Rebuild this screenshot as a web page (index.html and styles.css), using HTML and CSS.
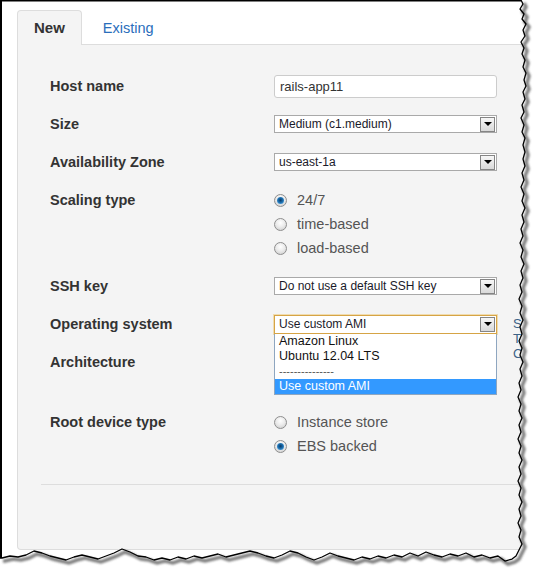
FILE: index.html
```html
<!DOCTYPE html>
<html>
<head>
<meta charset="utf-8">
<link rel="stylesheet" href="styles.css">
</head>
<body>
<div class="frame">
  <div class="tabs">
    <div class="tab active">New</div>
    <div class="tab">Existing</div>
  </div>
  <div class="panel">
    <div class="form">
      <div class="row">
        <div class="label">Host name</div>
        <div class="ctl"><div class="textbox">rails-app11</div></div>
      </div>
      <div class="row">
        <div class="label">Size</div>
        <div class="ctl"><div class="select"><span class="val">Medium (c1.medium)</span><span class="btn"></span></div></div>
      </div>
      <div class="row">
        <div class="label">Availability Zone</div>
        <div class="ctl"><div class="select"><span class="val">us-east-1a</span><span class="btn"></span></div></div>
      </div>
      <div class="row">
        <div class="label">Scaling type</div>
        <div class="radios">
          <div class="radio"><span class="dot on"></span>24/7</div>
          <div class="radio"><span class="dot"></span>time-based</div>
          <div class="radio"><span class="dot"></span>load-based</div>
        </div>
      </div>
      <div class="row">
        <div class="label">SSH key</div>
        <div class="ctl"><div class="select"><span class="val">Do not use a default SSH key</span><span class="btn"></span></div></div>
      </div>
      <div class="row os">
        <div class="label">Operating system</div>
        <div class="ctl">
          <div class="select focus"><span class="val">Use custom AMI</span><span class="btn"></span>
            <div class="dropdown">
              <div class="opt">Amazon Linux</div>
              <div class="opt">Ubuntu 12.04 LTS</div>
              <div class="opt dash">---------------</div>
              <div class="opt sel">Use custom AMI</div>
            </div>
          </div>
        </div>
        <div class="help">
          <div>Se</div>
          <div>Th</div>
          <div>Cu</div>
        </div>
      </div>
      <div class="row arch">
        <div class="label">Architecture</div>
        <div class="ctl"><div class="select"><span class="btn"></span></div></div>
      </div>
      <div class="row last">
        <div class="label">Root device type</div>
        <div class="radios">
          <div class="radio"><span class="dot"></span>Instance store</div>
          <div class="radio"><span class="dot on"></span>EBS backed</div>
        </div>
      </div>
    </div>
    <div class="sep"></div>
  </div>
  <svg class="tear" width="535" height="573" viewBox="0 0 535 573">
    <defs>
      <filter id="blur" x="-10%" y="-10%" width="120%" height="120%"><feGaussianBlur stdDeviation="1.2"/></filter>
    </defs>
    <path class="outside" d="M521,0 L523,4 L520,9 L524,14 L522,19 L526,24 L523,30 L525,36 L521,42 L524,48 L522,54 L525,60 L523,67 L526,73 L524,80 L526,86 L523,92 L525,99 L522,105 L524,112 L521,118 L524,125 L522,132 L525,138 L523,145 L525,152 L523,159 L525,166 L522,173 L524,180 L521,187 L524,194 L522,201 L525,208 L522,215 L524,222 L521,229 L523,236 L520,243 L523,250 L521,257 L524,264 L521,271 L523,278 L520,285 L522,292 L519,299 L522,306 L520,313 L523,320 L520,327 L522,334 L519,341 L522,348 L520,355 L523,362 L520,369 L522,376 L519,383 L521,390 L518,397 L521,404 L519,411 L522,418 L519,425 L521,432 L518,439 L521,446 L519,453 L522,460 L519,467 L521,474 L518,481 L521,488 L519,495 L522,502 L519,509 L521,516 L518,523 L521,530 L519,537 L522,544 L519,550 L516,556 L512,559 L505,561 L498,556 L490,558 L482,555 L474,557 L466,553 L458,556 L450,554 L442,557 L434,555 L426,552 L418,556 L410,553 L402,557 L394,555 L386,558 L378,556 L370,559 L362,557 L354,560 L346,558 L338,556 L330,553 L322,557 L314,560 L306,557 L298,553 L290,551 L282,555 L274,558 L266,556 L258,553 L250,551 L242,553 L234,555 L226,557 L218,554 L210,556 L202,558 L194,556 L186,559 L178,557 L170,560 L162,558 L154,560 L146,557 L138,556 L130,552 L122,549 L114,553 L106,556 L98,559 L90,557 L82,555 L74,557 L66,560 L58,558 L50,556 L42,553 L34,551 L26,555 L18,557 L10,556 L2,558 L0,558 L0,573 L535,573 L535,0 Z"/>
    <path class="shadow" filter="url(#blur)" transform="translate(3,3)" d="M521,0 L523,4 L520,9 L524,14 L522,19 L526,24 L523,30 L525,36 L521,42 L524,48 L522,54 L525,60 L523,67 L526,73 L524,80 L526,86 L523,92 L525,99 L522,105 L524,112 L521,118 L524,125 L522,132 L525,138 L523,145 L525,152 L523,159 L525,166 L522,173 L524,180 L521,187 L524,194 L522,201 L525,208 L522,215 L524,222 L521,229 L523,236 L520,243 L523,250 L521,257 L524,264 L521,271 L523,278 L520,285 L522,292 L519,299 L522,306 L520,313 L523,320 L520,327 L522,334 L519,341 L522,348 L520,355 L523,362 L520,369 L522,376 L519,383 L521,390 L518,397 L521,404 L519,411 L522,418 L519,425 L521,432 L518,439 L521,446 L519,453 L522,460 L519,467 L521,474 L518,481 L521,488 L519,495 L522,502 L519,509 L521,516 L518,523 L521,530 L519,537 L522,544 L519,550 L516,556 L512,559 L505,561 L498,556 L490,558 L482,555 L474,557 L466,553 L458,556 L450,554 L442,557 L434,555 L426,552 L418,556 L410,553 L402,557 L394,555 L386,558 L378,556 L370,559 L362,557 L354,560 L346,558 L338,556 L330,553 L322,557 L314,560 L306,557 L298,553 L290,551 L282,555 L274,558 L266,556 L258,553 L250,551 L242,553 L234,555 L226,557 L218,554 L210,556 L202,558 L194,556 L186,559 L178,557 L170,560 L162,558 L154,560 L146,557 L138,556 L130,552 L122,549 L114,553 L106,556 L98,559 L90,557 L82,555 L74,557 L66,560 L58,558 L50,556 L42,553 L34,551 L26,555 L18,557 L10,556 L2,558 L0,558"/>
    <path class="edge" d="M521,0 L523,4 L520,9 L524,14 L522,19 L526,24 L523,30 L525,36 L521,42 L524,48 L522,54 L525,60 L523,67 L526,73 L524,80 L526,86 L523,92 L525,99 L522,105 L524,112 L521,118 L524,125 L522,132 L525,138 L523,145 L525,152 L523,159 L525,166 L522,173 L524,180 L521,187 L524,194 L522,201 L525,208 L522,215 L524,222 L521,229 L523,236 L520,243 L523,250 L521,257 L524,264 L521,271 L523,278 L520,285 L522,292 L519,299 L522,306 L520,313 L523,320 L520,327 L522,334 L519,341 L522,348 L520,355 L523,362 L520,369 L522,376 L519,383 L521,390 L518,397 L521,404 L519,411 L522,418 L519,425 L521,432 L518,439 L521,446 L519,453 L522,460 L519,467 L521,474 L518,481 L521,488 L519,495 L522,502 L519,509 L521,516 L518,523 L521,530 L519,537 L522,544 L519,550 L516,556 L512,559 L505,561 L498,556 L490,558 L482,555 L474,557 L466,553 L458,556 L450,554 L442,557 L434,555 L426,552 L418,556 L410,553 L402,557 L394,555 L386,558 L378,556 L370,559 L362,557 L354,560 L346,558 L338,556 L330,553 L322,557 L314,560 L306,557 L298,553 L290,551 L282,555 L274,558 L266,556 L258,553 L250,551 L242,553 L234,555 L226,557 L218,554 L210,556 L202,558 L194,556 L186,559 L178,557 L170,560 L162,558 L154,560 L146,557 L138,556 L130,552 L122,549 L114,553 L106,556 L98,559 L90,557 L82,555 L74,557 L66,560 L58,558 L50,556 L42,553 L34,551 L26,555 L18,557 L10,556 L2,558 L0,558"/>
    <path class="border" d="M1,558 L1,0.5 L521,0.5"/>
  </svg>
</div>
</body>
</html>
```
FILE: styles.css
```css
* { box-sizing: border-box; }
html, body { margin: 0; padding: 0; background: #fff; overflow: hidden; }

.frame {
  position: relative;
  width: 535px;
  height: 573px;
  overflow: hidden;
  background: #fff;
  font-family: "Liberation Sans", Arial, sans-serif;
}

.tabs {
  display: flex;
  margin-left: 17px;
  padding-top: 10px;
  border-bottom: 1px solid #ddd;
}
.tab {
  height: 35px;
  line-height: 34px;
  padding: 0 16px;
  margin-right: 4px;
  margin-bottom: -1px;
  font-size: 14.5px;
  color: #2a6ebb;
  border: 1px solid transparent;
  border-bottom: none;
}
.tab.active {
  background: #f4f4f4;
  border-color: #ddd;
  border-radius: 4px 4px 0 0;
  color: #333;
  font-weight: bold;
  font-size: 15px;
}

.panel {
  margin-left: 17px;
  width: 518px;
  background: #f4f4f4;
  border: 1px solid #ddd;
  border-top: none;
  border-radius: 0 0 4px 4px;
  padding: 29px 0 64px 0;
  overflow: hidden;
}

.form { padding-left: 32px; }

.row {
  display: flex;
  align-items: flex-start;
  padding-bottom: 14px;
}
.row.os { height: 38px; }
.row.arch { padding-bottom: 36px; }
.row.last { padding-bottom: 0; }

.label {
  width: 224px;
  flex: none;
  font-weight: bold;
  font-size: 14.5px;
  line-height: 24px;
  color: #333;
}

.ctl {
  width: 223px;
  flex: none;
  height: 24px;
  display: flex;
  align-items: center;
  position: relative;
}

.textbox {
  width: 100%;
  height: 23px;
  border: 1px solid #ccc;
  border-radius: 3px;
  background: #fff;
  padding-left: 5px;
  font-size: 13px;
  line-height: 21px;
  color: #333;
}

.select {
  position: relative;
  width: 100%;
  height: 18px;
  border: 1px solid #a9a9a9;
  background: #fff;
  display: flex;
  align-items: center;
  justify-content: space-between;
}
.select .btn:only-child { margin-left: auto; }
.select.focus {
  height: 19px;
  border-color: #d6a445;
  box-shadow: 0 0 0 1px rgba(236, 200, 120, 0.55);
  z-index: 5;
}
.val {
  padding-left: 4px;
  font-size: 12px;
  color: #1a1a2a;
  white-space: nowrap;
}
.btn {
  width: 15px;
  height: 15px;
  margin-right: 1px;
  border: 1px solid #858585;
  background: linear-gradient(#f7f7f7, #d9d9d9);
  display: flex;
  align-items: center;
  justify-content: center;
  flex: none;
}
.btn::after {
  content: "";
  border-left: 4px solid transparent;
  border-right: 4px solid transparent;
  border-top: 4px solid #000;
}

.dropdown {
  position: absolute;
  left: -1px;
  right: -1px;
  top: calc(100% + 1px);
  background: #fff;
  border: 1px solid #8ea6c0;
  border-top: none;
}
.opt {
  height: 15px;
  line-height: 15px;
  padding-left: 4px;
  font-size: 12.5px;
  color: #111;
  white-space: nowrap;
}
.opt.dash { color: #555; font-size: 11px; }
.opt.sel { background: #3399ff; color: #fff; }

.help {
  flex: none;
  margin-left: 16px;
  padding-top: 4px;
  font-size: 13px;
  line-height: 15px;
  color: #3d6286;
  white-space: nowrap;
}

.radios { display: flex; flex-direction: column; }
.radio {
  height: 24px;
  display: flex;
  align-items: center;
  font-size: 14.5px;
  color: #555;
}
.dot {
  position: relative;
  flex: none;
  width: 13px;
  height: 13px;
  margin-right: 10px;
  border-radius: 50%;
  border: 1px solid #8e8e8e;
  background: radial-gradient(circle at 50% 35%, #ffffff 0, #ececec 45%, #c9c9c9 100%);
}
.dot.on::after {
  content: "";
  position: absolute;
  left: 2px;
  top: 2px;
  width: 7px;
  height: 7px;
  border-radius: 50%;
  background: radial-gradient(circle at 50% 45%, #0a3a63 0, #1b6cad 45%, #6cbcf0 100%);
}

.sep {
  margin: 26px 0 0 23px;
  border-top: 1px solid #ddd;
}

.tear {
  position: absolute;
  left: 0;
  top: 0;
  pointer-events: none;
  z-index: 10;
}
.tear .outside { fill: #fff; }
.tear .shadow { fill: none; stroke: #555; stroke-width: 3.5; opacity: 0.75; }
.tear .edge { fill: none; stroke: #000; stroke-width: 1.3; stroke-linejoin: round; }
.tear .border { fill: none; stroke: #000; stroke-width: 2; }
```
